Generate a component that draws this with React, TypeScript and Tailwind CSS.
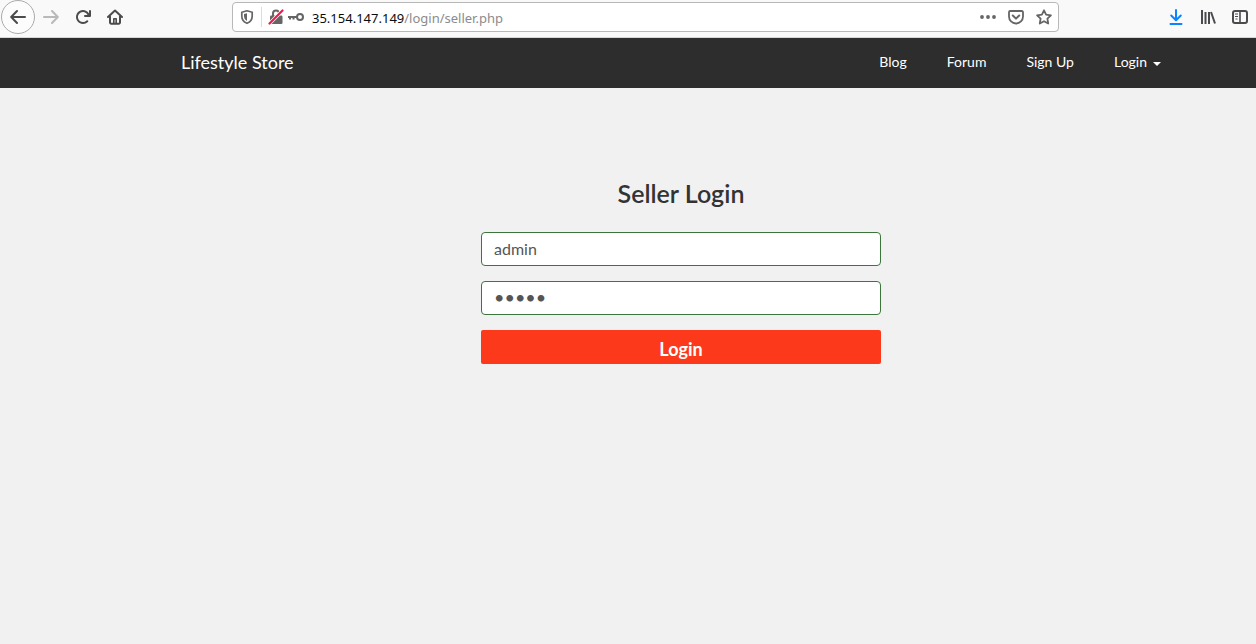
import type { ReactNode } from 'react';

function Icon({ children }: { children: ReactNode }) {
  return (
    <svg viewBox="0 0 16 16" className="size-4 shrink-0" fill="none" stroke="currentColor" strokeWidth="2" strokeLinecap="round" strokeLinejoin="round" aria-hidden="true">
      {children}
    </svg>
  );
}

function ToolButton({ label, className = 'w-8', children }: { label: string; className?: string; children: ReactNode }) {
  return (
    <button type="button" aria-label={label} className={`flex h-8 shrink-0 items-center justify-center ${className}`}>
      <Icon>{children}</Icon>
    </button>
  );
}

function BrowserBar() {
  return (
    <div className="flex h-[38px] items-start border-b border-[#d4d8d8] bg-[#f9f9fa] pt-px text-[#4b4b4d]">
      <button type="button" aria-label="Back" className="ml-px flex size-[34px] shrink-0 items-center justify-center rounded-full border border-[#ababab] bg-[#fcfcfc] -mt-px">
        <Icon>
          <path d="M15 8H1.5M7 2 1.2 8 7 14" />
        </Icon>
      </button>
      <ToolButton label="Forward">
        <path d="M1 8h13.5M9 2l5.8 6L9 14" stroke="#b9b9ba" />
      </ToolButton>
      <ToolButton label="Reload">
        <path fill="currentColor" stroke="none" d="M15 1a1 1 0 0 0-1 1v2.418A6.995 6.995 0 1 0 8 15a6.954 6.954 0 0 0 4.95-2.05 1 1 0 0 0-1.414-1.414A5.019 5.019 0 1 1 12.549 6H10a1 1 0 0 0 0 2h5a1 1 0 0 0 1-1V2a1 1 0 0 0-1-1z" />
      </ToolButton>
      <ToolButton label="Home">
        <path d="M1 8 8 1.5 15 8M3 7.5V13.5a1.2 1.2 0 0 0 1.2 1.2h7.6a1.2 1.2 0 0 0 1.2-1.2V7.5" />
        <path d="M6.8 14V9.8h2.4V14" strokeWidth="1.6" />
      </ToolButton>
      <div className="ml-[101px] mr-[101px] mt-px flex h-[30px] min-w-0 flex-1 items-center rounded-sm border border-[#b8b8b9] bg-white text-[#656566]">
        <ToolButton label="Tracking protection" className="w-7">
          <path d="M8 1.8 13.2 3.2V7c0 4-2.4 6.2-5.2 7.3C5.2 13.2 2.8 11 2.8 7V3.2z" strokeWidth="1.7" />
          <path fill="currentColor" stroke="none" d="M8 4.3v7.7C6 10.8 5 9.3 5 7V5z" />
        </ToolButton>
        <span className="h-5 w-px bg-[#dcdcdc]" />
        <ToolButton label="Connection is not secure" className="ml-1.5 w-4">
          <path d="M5 7V4.5a3 3 0 0 1 6 0V7" />
          <rect x="2" y="6.5" width="12.5" height="8.5" rx="1.2" fill="currentColor" stroke="none" />
          <path d="M1.5 14.5 14.5 1.5" stroke="#fff" strokeWidth="3.6" />
          <path d="M1.5 14.5 14.5 1.5" stroke="#f0184c" strokeWidth="2.2" />
        </ToolButton>
        <ToolButton label="Saved login" className="ml-1 w-4">
          <circle cx="12" cy="8" r="3" />
          <path d="M9 8H0M2 8v2.5M5.5 8v2.5" strokeLinecap="butt" />
        </ToolButton>
        <div role="textbox" aria-label="Address" className="ml-2 min-w-0 flex-1 truncate pt-1 font-['Noto_Sans',sans-serif] text-[13px] text-[#8b8b8c]">
          <span className="text-[#0c0c0d]">35.154.147.149</span>/login/seller.php
        </div>
        <ToolButton label="Page actions" className="w-7">
          <g fill="currentColor" stroke="none">
            <circle cx="2" cy="8" r="1.9" />
            <circle cx="8" cy="8" r="1.9" />
            <circle cx="14" cy="8" r="1.9" />
          </g>
        </ToolButton>
        <ToolButton label="Save to Pocket" className="w-7">
          <path d="M2.2 2h11.6a1.2 1.2 0 0 1 1.2 1.2V7.5a7 7 0 0 1-14 0V3.2A1.2 1.2 0 0 1 2.2 2z" strokeWidth="1.8" />
          <path d="M4.8 6.5 8 9.6l3.2-3.1" />
        </ToolButton>
        <ToolButton label="Bookmark" className="w-7">
          <path d="m8 1.3 2.1 4.3 4.8.7-3.5 3.4.8 4.8L8 12.2l-4.2 2.3.8-4.8L1.1 6.3l4.8-.7z" strokeWidth="1.8" />
        </ToolButton>
      </div>
      <ToolButton label="Downloads">
        <path d="M8 1v9.5M3.2 6.5 8 11.2l4.8-4.7M2.5 15h11" stroke="#0a84ff" />
      </ToolButton>
      <ToolButton label="Library">
        <path d="M2 1v14M5.5 3v12M9 3v12M11 3l4 11.5" strokeLinecap="butt" />
      </ToolButton>
      <ToolButton label="Sidebars">
        <rect x="1" y="2" width="14" height="12" rx="2" />
        <path d="M8 2v12" strokeWidth="1.6" />
        <path d="M3 5h3M3 7.5h3M3.5 10h2" strokeWidth="1" strokeLinecap="butt" />
      </ToolButton>
    </div>
  );
}

function SiteNav() {
  return (
    <header className="bg-[#2d2d2d] pl-[106px] text-white">
      <nav className="mx-auto flex h-[50px] max-w-[1000px] items-center justify-between pb-0.5">
        <a href="#home" className="text-lg">Lifestyle Store</a>
        <ul className="flex items-center gap-10 pr-5 text-sm">
          <li><a href="#blog">Blog</a></li>
          <li><a href="#forum">Forum</a></li>
          <li><a href="#signup">Sign Up</a></li>
          <li>
            <button type="button" className="flex items-center gap-1.5">
              Login
              <span className="mt-1 border-x-4 border-t-4 border-x-transparent border-t-white" />
            </button>
          </li>
        </ul>
      </nav>
    </header>
  );
}

export default function App() {
  const field = 'h-[34px] w-full rounded border border-[#3c763d] bg-white px-3 pb-0.5 text-[#555555] outline-none';
  return (
    <div className="min-h-screen bg-[#f1f1f1] font-[Lato,sans-serif]">
      <BrowserBar />
      <SiteNav />
      <main className="pl-[106px] pt-[91px]">
        <form className="mx-auto flex max-w-[400px] flex-col gap-[15px]" onSubmit={(e) => e.preventDefault()}>
          <h1 className="mb-[10px] text-center text-[25px] leading-7 font-semibold text-[#333333]">Seller Login</h1>
          <input aria-label="Username" className={`${field} text-base`} type="text" defaultValue="admin" />
          <input aria-label="Password" className={`${field} text-lg`} type="password" defaultValue="admin" />
          <button type="submit" className="h-[34px] rounded-xs bg-[#fc3a1b] pt-1 text-lg leading-6 font-bold text-white">Login</button>
        </form>
      </main>
    </div>
  );
}
